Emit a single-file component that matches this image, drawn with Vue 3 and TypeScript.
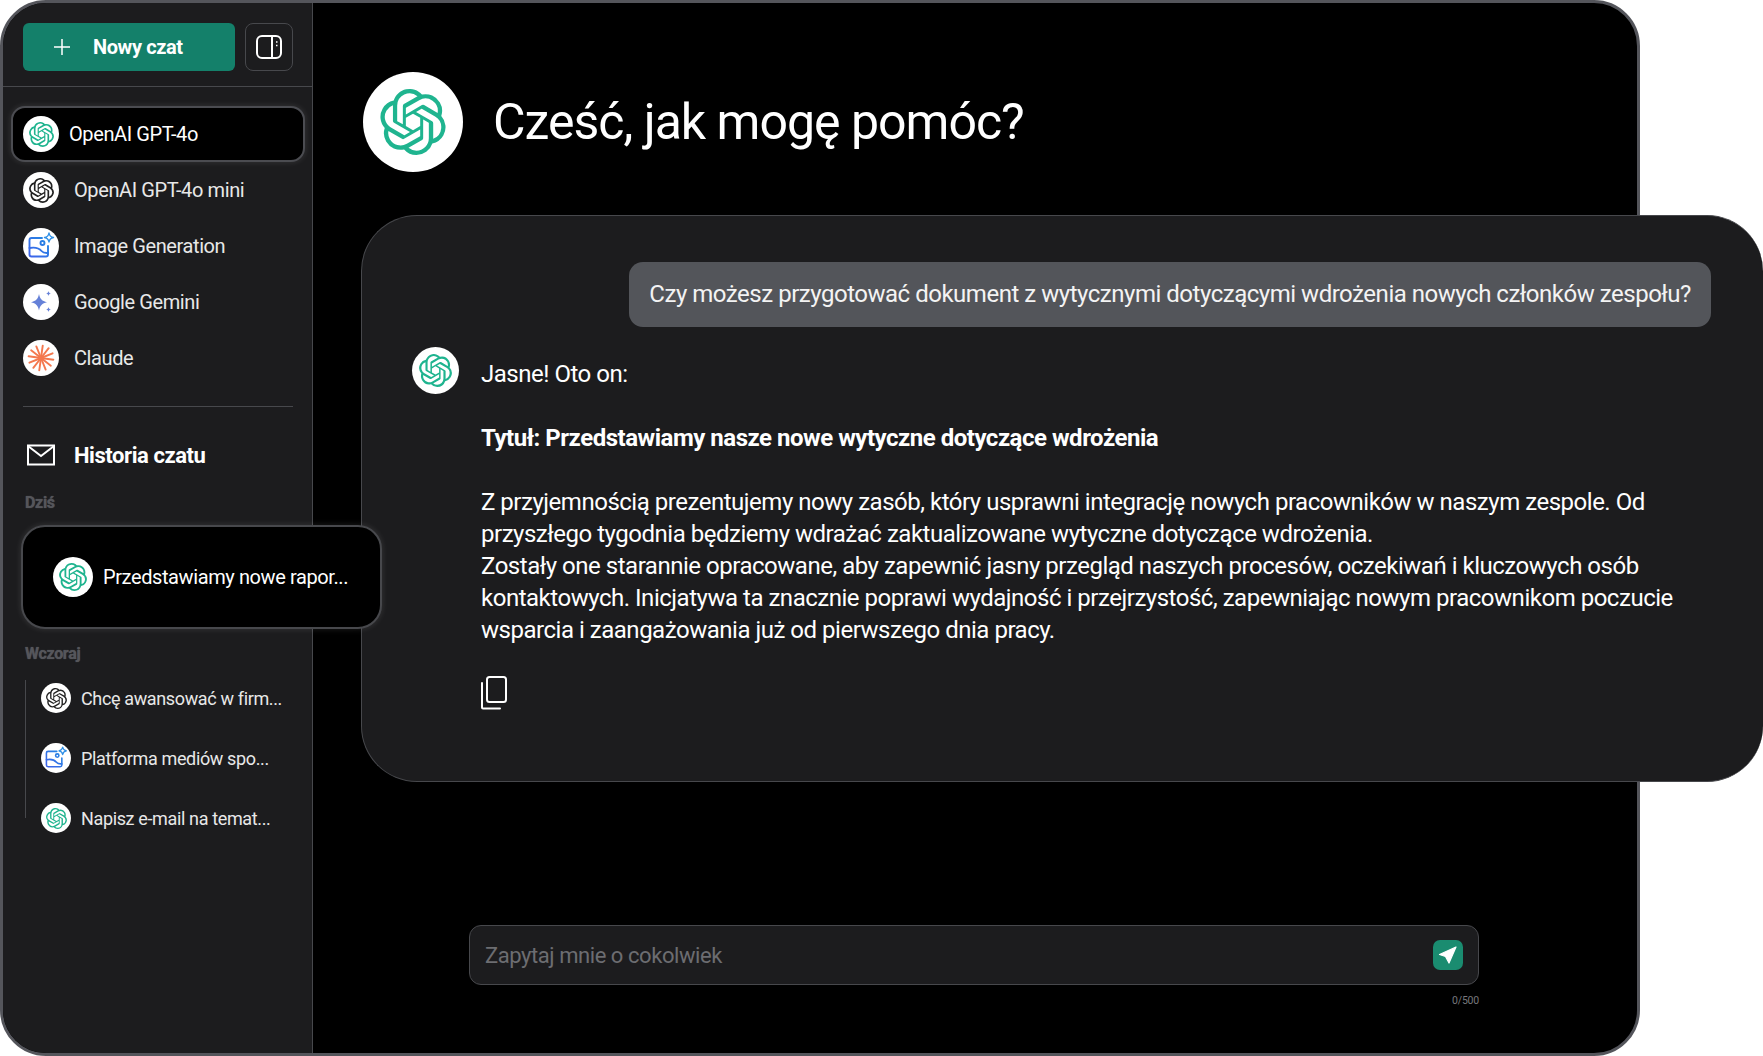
<script setup lang="ts">
type Tone = "green" | "dark" | "image" | "gemini" | "claude";

const models: { name: string; tone: Tone; active?: boolean }[] = [
  { name: "OpenAI GPT-4o", tone: "green", active: true },
  { name: "OpenAI GPT-4o mini", tone: "dark" },
  { name: "Image Generation", tone: "image" },
  { name: "Google Gemini", tone: "gemini" },
  { name: "Claude", tone: "claude" },
];

const yesterday: { title: string; tone: Tone }[] = [
  { title: "Chcę awansować w firm...", tone: "dark" },
  { title: "Platforma mediów spo...", tone: "image" },
  { title: "Napisz e-mail na temat...", tone: "green" },
];

const rays = [0, 30, 60, 90, 120, 150, 180, 210, 240, 270, 300, 330];
</script>

<template>
  <div class="frame">
    <svg class="defs" aria-hidden="true">
      <defs>
        <linearGradient id="img-grad" gradientUnits="userSpaceOnUse" x1="7" y1="28" x2="28" y2="7">
          <stop offset="0" stop-color="#3d63ea" />
          <stop offset="1" stop-color="#1f8fe0" />
        </linearGradient>
      </defs>
      <symbol id="logo" viewBox="0 0 24 24">
        <path fill="currentColor" d="M22.2819 9.8211a5.9847 5.9847 0 0 0-.5157-4.9108 6.0462 6.0462 0 0 0-6.5098-2.9A6.0651 6.0651 0 0 0 4.9807 4.1818a5.9847 5.9847 0 0 0-3.9977 2.9 6.0462 6.0462 0 0 0 .7427 7.0966 5.98 5.98 0 0 0 .511 4.9107 6.051 6.051 0 0 0 6.5146 2.9001A5.9847 5.9847 0 0 0 13.2599 24a6.0557 6.0557 0 0 0 5.7718-4.2058 5.9894 5.9894 0 0 0 3.9977-2.9001 6.0557 6.0557 0 0 0-.7475-7.0729zm-9.022 12.6081a4.4755 4.4755 0 0 1-2.8764-1.0408l.1419-.0804 4.7783-2.7582a.7948.7948 0 0 0 .3927-.6813v-6.7369l2.02 1.1686a.071.071 0 0 1 .038.052v5.5826a4.504 4.504 0 0 1-4.4945 4.4944zm-9.6607-4.1254a4.4708 4.4708 0 0 1-.5346-3.0137l.142.0852 4.783 2.7582a.7712.7712 0 0 0 .7806 0l5.8428-3.3685v2.3324a.0804.0804 0 0 1-.0332.0615L9.74 19.9502a4.4992 4.4992 0 0 1-6.1408-1.6464zM2.3408 7.8956a4.485 4.485 0 0 1 2.3655-1.9728V11.6a.7664.7664 0 0 0 .3879.6765l5.8144 3.3543-2.0201 1.1685a.0757.0757 0 0 1-.071 0l-4.8303-2.7865A4.504 4.504 0 0 1 2.3408 7.872zm16.5963 3.8558L13.1038 8.364 15.1192 7.2a.0757.0757 0 0 1 .071 0l4.8303 2.7913a4.4944 4.4944 0 0 1-.6765 8.1042v-5.6772a.79.79 0 0 0-.407-.667zm2.0107-3.0231l-.142-.0852-4.7735-2.7818a.7759.7759 0 0 0-.7854 0L9.409 9.2297V6.8974a.0662.0662 0 0 1 .0284-.0615l4.8303-2.7866a4.4992 4.4992 0 0 1 6.6802 4.66zM8.3065 12.863l-2.02-1.1638a.0804.0804 0 0 1-.038-.0567V6.0742a4.4992 4.4992 0 0 1 7.3757-3.4537l-.142.0805L8.704 5.459a.7948.7948 0 0 0-.3927.6813zm1.0976-2.3654l2.602-1.4998 2.6069 1.4998v2.9994l-2.5974 1.4997-2.6067-1.4997Z" />
      </symbol>
      <symbol id="tone-image" viewBox="0 0 36 36">
        <g fill="none" stroke="url(#img-grad)" stroke-width="1.900" stroke-linecap="round" stroke-linejoin="round">
          <path d="M19 10H8.500A2 2 0 0 0 6.500 12v14.500a2 2 0 0 0 2 2H23a2 2 0 0 0 2-2V18" />
          <path d="M6.500 20c5.500-1 9.500 0 12 3 1.400 1.700 3.500 2.300 6.500 2" />
          <circle cx="19.500" cy="15" r="2" />
        </g>
        <path fill="none" stroke="#2f8fe6" stroke-width="1.400" stroke-linejoin="round" d="M26 5c.5 3 1.500 4 4.500 4.500-3 .5-4 1.500-4.500 4.500-.5-3-1.500-4-4.500-4.500 3-.5 4-1.500 4.500-4.500z" />
      </symbol>
      <symbol id="tone-gemini" viewBox="0 0 36 36">
        <g fill="#6581d8">
          <path d="M16 10c1 5 3 7 8 8.200-5 1.100-7 3.300-8 8.300-1-5-3-7.200-8-8.300 5-1.200 7-3.200 8-8.200z" />
          <path d="M25.500 7c.3 1.700 1 2.300 2.500 2.500-1.500.3-2.200 1-2.500 2.500-.3-1.500-1-2.200-2.500-2.500 1.500-.2 2.200-.8 2.500-2.500z" />
          <path d="M25.500 23c.3 1.700 1 2.300 2.500 2.500-1.500.3-2.200 1-2.500 2.500-.3-1.500-1-2.200-2.500-2.500 1.500-.2 2.200-.8 2.500-2.500z" />
        </g>
      </symbol>
      <symbol id="tone-claude" viewBox="0 0 36 36">
        <g stroke="#f4784e" stroke-width="1.900" stroke-linecap="round">
          <line v-for="r in rays" :key="r" x1="18" y1="18" x2="18" y2="5.500" :transform="`rotate(${r + 8} 18 18)`" />
        </g>
      </symbol>
    </svg>

    <aside class="sidebar">
      <div class="top-row">
        <button class="new-chat">
          <svg width="20" height="20" viewBox="0 0 20 20" fill="none" stroke="#fff" stroke-width="1.500">
            <path d="M10 2v16M2 10h16" />
          </svg>
          <span>Nowy czat</span>
        </button>
        <button class="toggle">
          <svg width="28" height="26" viewBox="0 0 28 26" fill="none" stroke="#fff" stroke-width="2">
            <rect x="2" y="2" width="24" height="22" rx="5" />
            <path d="M17 2v22" />
            <path d="M21 8h1.500M21 11.500h1.500" stroke-width="1.500" />
          </svg>
        </button>
      </div>

      <ul class="models">
        <li v-for="m in models" :key="m.name" class="model" :class="{ active: m.active }">
          <span class="avatar size-36" :class="m.tone">
            <svg v-if="m.tone === 'green' || m.tone === 'dark'" class="mark"><use href="#logo" /></svg>
            <svg v-else class="full"><use :href="`#tone-${m.tone}`" /></svg>
          </span>
          <span>{{ m.name }}</span>
        </li>
      </ul>

      <div class="rule"></div>

      <div class="history-head">
        <svg width="28" height="22" viewBox="0 0 28 22" fill="none" stroke="#fff" stroke-width="2">
          <rect x="1" y="1.500" width="26" height="19" />
          <path d="M1 2l13 10L27 2" />
        </svg>
        <span>Historia czatu</span>
      </div>

      <div class="day first">Dziś</div>
      <div class="current">
        <span class="avatar size-40 green">
          <svg class="mark"><use href="#logo" /></svg>
        </span>
        <span>Przedstawiamy nowe rapor...</span>
      </div>

      <div class="day">Wczoraj</div>
      <ul class="older">
        <li v-for="c in yesterday" :key="c.title" class="older-item">
          <span class="avatar size-30" :class="c.tone">
            <svg v-if="c.tone === 'green' || c.tone === 'dark'" class="mark"><use href="#logo" /></svg>
            <svg v-else class="full"><use :href="`#tone-${c.tone}`" /></svg>
          </span>
          <span>{{ c.title }}</span>
        </li>
      </ul>
    </aside>

    <main class="main">
      <header class="greeting">
        <span class="avatar size-100 green">
          <svg class="mark"><use href="#logo" /></svg>
        </span>
        <h1>Cześć, jak mogę pomóc?</h1>
      </header>

      <section class="chat-card">
        <div class="question">Czy możesz przygotować dokument z wytycznymi dotyczącymi wdrożenia nowych członków zespołu?</div>
        <div class="answer">
          <span class="avatar size-47 green">
            <svg class="mark"><use href="#logo" /></svg>
          </span>
          <div class="answer-body">
            <p>Jasne! Oto on:</p>
            <p class="bold">Tytuł: Przedstawiamy nasze nowe wytyczne dotyczące wdrożenia</p>
            <p>
              Z przyjemnością prezentujemy nowy zasób, który usprawni integrację nowych pracowników w naszym zespole. Od przyszłego tygodnia będziemy wdrażać zaktualizowane wytyczne dotyczące wdrożenia.<br />
              Zostały one starannie opracowane, aby zapewnić jasny przegląd naszych procesów, oczekiwań i kluczowych osób kontaktowych. Inicjatywa ta znacznie poprawi wydajność i przejrzystość, zapewniając nowym pracownikom poczucie wsparcia i zaangażowania już od pierwszego dnia pracy.
            </p>
            <svg class="copy" width="28" height="34" viewBox="0 0 28 34" fill="none" stroke="#fff" stroke-width="2" stroke-linecap="round" stroke-linejoin="round">
              <rect x="7" y="1" width="19" height="25" rx="2.500" />
              <path d="M2 7v24.500a1 1 0 0 0 1 1h17" />
            </svg>
          </div>
        </div>
      </section>

      <div class="composer">
        <div class="input">
          <span>Zapytaj mnie o cokolwiek</span>
          <button class="send">
            <svg width="30" height="30" viewBox="0 0 30 30">
              <path d="M23 7 6.500 14.500 12.500 16.500 16 23Z" fill="#fff" stroke="#fff" stroke-width="1.200" stroke-linejoin="round" />
            </svg>
          </button>
        </div>
        <div class="counter">0/500</div>
      </div>
    </main>
  </div>
</template>

<style>
html,
body {
  background: #fff;
  overflow: hidden;
}
</style>

<style scoped>
.frame {
  box-sizing: border-box;
  width: 1640px;
  height: 1056px;
  display: flex;
  background: #000;
  border: 3px solid #54555b;
  border-radius: 46px;
  font-family: Roboto, "Liberation Sans", sans-serif;
  color: #fff;
}

.frame * {
  letter-spacing: -0.02em;
}

.defs {
  flex: none;
  width: 0;
  height: 0;
}

ul {
  list-style: none;
  margin: 0;
  padding: 0;
}

button {
  border: 0;
  padding: 0;
  font: inherit;
  color: inherit;
}

.avatar {
  flex: none;
  display: flex;
  align-items: center;
  justify-content: center;
  background: #fff;
  border-radius: 50%;
}

.avatar .full {
  width: 100%;
  height: 100%;
}

.avatar.green {
  color: #1fb48f;
}

.avatar.dark {
  color: #222;
}

.size-36 {
  width: 36px;
  height: 36px;
}

.size-36 .mark {
  width: 25px;
  height: 25px;
}

.size-40 {
  width: 40px;
  height: 40px;
}

.size-40 .mark {
  width: 28px;
  height: 28px;
}

.size-30 {
  width: 30px;
  height: 30px;
}

.size-30 .mark {
  width: 21px;
  height: 21px;
}

.size-47 {
  width: 47px;
  height: 47px;
}

.size-47 .mark {
  width: 33px;
  height: 33px;
}

.size-100 {
  width: 100px;
  height: 100px;
}

.size-100 .mark {
  width: 66px;
  height: 66px;
}

.sidebar {
  flex: none;
  box-sizing: border-box;
  width: 310px;
  background: #1c1c1e;
  border-right: 1px solid #47484c;
  border-radius: 43px 0 0 43px;
}

.top-row {
  display: flex;
  gap: 10px;
  padding: 20px 20px 15px;
  border-bottom: 1px solid #47484c;
}

.new-chat {
  width: 212px;
  height: 48px;
  flex: none;
  display: flex;
  align-items: center;
  gap: 21px;
  padding-left: 29px;
  box-sizing: border-box;
  background: #14806a;
  border-radius: 6px;
  font-size: 20px;
  font-weight: 700;
}

.toggle {
  box-sizing: border-box;
  width: 48px;
  height: 48px;
  flex: none;
  display: flex;
  align-items: center;
  justify-content: center;
  background: #1c1c1e;
  border: 1px solid #47484c;
  border-radius: 8px;
}

.models {
  padding: 19px 0 20px 8px;
}

.model {
  box-sizing: border-box;
  width: 294px;
  height: 56px;
  display: flex;
  align-items: center;
  gap: 15px;
  padding-left: 12px;
  font-size: 20px;
  color: #e8e8e8;
}

.model.active {
  gap: 10px;
  background: #000;
  border: 2px solid #4b4c51;
  border-radius: 14px;
  padding-left: 10px;
  color: #fff;
  box-shadow: 0 0 6px rgba(255, 255, 255, 0.12);
}

.rule {
  height: 1px;
  margin: 0 19px 0 20px;
  background: #47484c;
}

.history-head {
  display: flex;
  align-items: center;
  gap: 19px;
  margin: 36px 0 0 24px;
  font-size: 22px;
  font-weight: 700;
  height: 24px;
}

.day {
  margin: 15px 0 0 22px;
  font-size: 16px;
  font-weight: 700;
  line-height: 20px;
  color: #55565b;
  text-shadow: 0 0 1px #55565b;
}

.day.first {
  margin-top: 26px;
}

.current {
  box-sizing: border-box;
  position: relative;
  z-index: 2;
  width: 361px;
  height: 104px;
  margin: 12px 0 0 18px;
  display: flex;
  align-items: center;
  gap: 10px;
  padding-left: 30px;
  background: #000;
  border: 2px solid #47484c;
  border-radius: 24px;
  font-size: 20px;
  box-shadow: 0 0 6px rgba(255, 255, 255, 0.12);
}

.older {
  margin: 16px 0 0 22px;
  padding-top: 3px;
  height: 138px;
  border-left: 1px solid #47484c;
  box-sizing: border-box;
}

.older-item {
  display: flex;
  align-items: center;
  gap: 10px;
  height: 30px;
  margin: 0 0 30px 15px;
  font-size: 18px;
  color: #e8e8e8;
  white-space: nowrap;
}

.main {
  flex: 1;
  min-width: 0;
  display: flex;
  flex-direction: column;
  padding-left: 48px;
}

.greeting {
  display: flex;
  align-items: center;
  gap: 30px;
  margin: 69px 0 0 2px;
}

.greeting h1 {
  margin: 0;
  font-size: 50px;
  font-weight: 400;
}

.chat-card {
  box-sizing: border-box;
  height: 567px;
  margin: 43px -126px 0 0;
  padding: 46px 52px 0 50px;
  display: flex;
  flex-direction: column;
  position: relative;
  z-index: 1;
  background: #1c1c1e;
  border: 1px solid #47484c;
  border-right: 0;
  border-radius: 56px;
}

.question {
  align-self: flex-end;
  padding: 16px 20px;
  line-height: 33px;
  background: #53555a;
  border-radius: 14px;
  font-size: 24px;
  color: #f3f3f3;
  white-space: nowrap;
}

.answer {
  display: flex;
  gap: 22px;
  margin-top: 20px;
}

.answer-body {
  flex: 1;
  padding-top: 11px;
  font-size: 24px;
  line-height: 32px;
}

.answer-body p {
  margin: 0 0 32px;
}

.bold {
  font-weight: 700;
}

.copy {
  display: block;
  margin: -2px 0 0 -1px;
}

.composer {
  width: 1010px;
  margin: auto auto 0;
  padding-bottom: 46px;
  transform: translateX(-25px);
}

.input {
  box-sizing: border-box;
  height: 60px;
  display: flex;
  align-items: center;
  justify-content: space-between;
  padding: 0 15px;
  background: #1c1c1e;
  border: 1px solid #47484c;
  border-radius: 12px;
  font-size: 22px;
  color: #6c6d71;
}

.send {
  width: 30px;
  height: 30px;
  display: block;
  background: #1a8c70;
  border-radius: 7px;
}

.send svg {
  display: block;
}

.counter {
  margin-top: 9px;
  text-align: right;
  font-size: 10.500px;
  line-height: 13px;
  color: #77787c;
}
</style>
